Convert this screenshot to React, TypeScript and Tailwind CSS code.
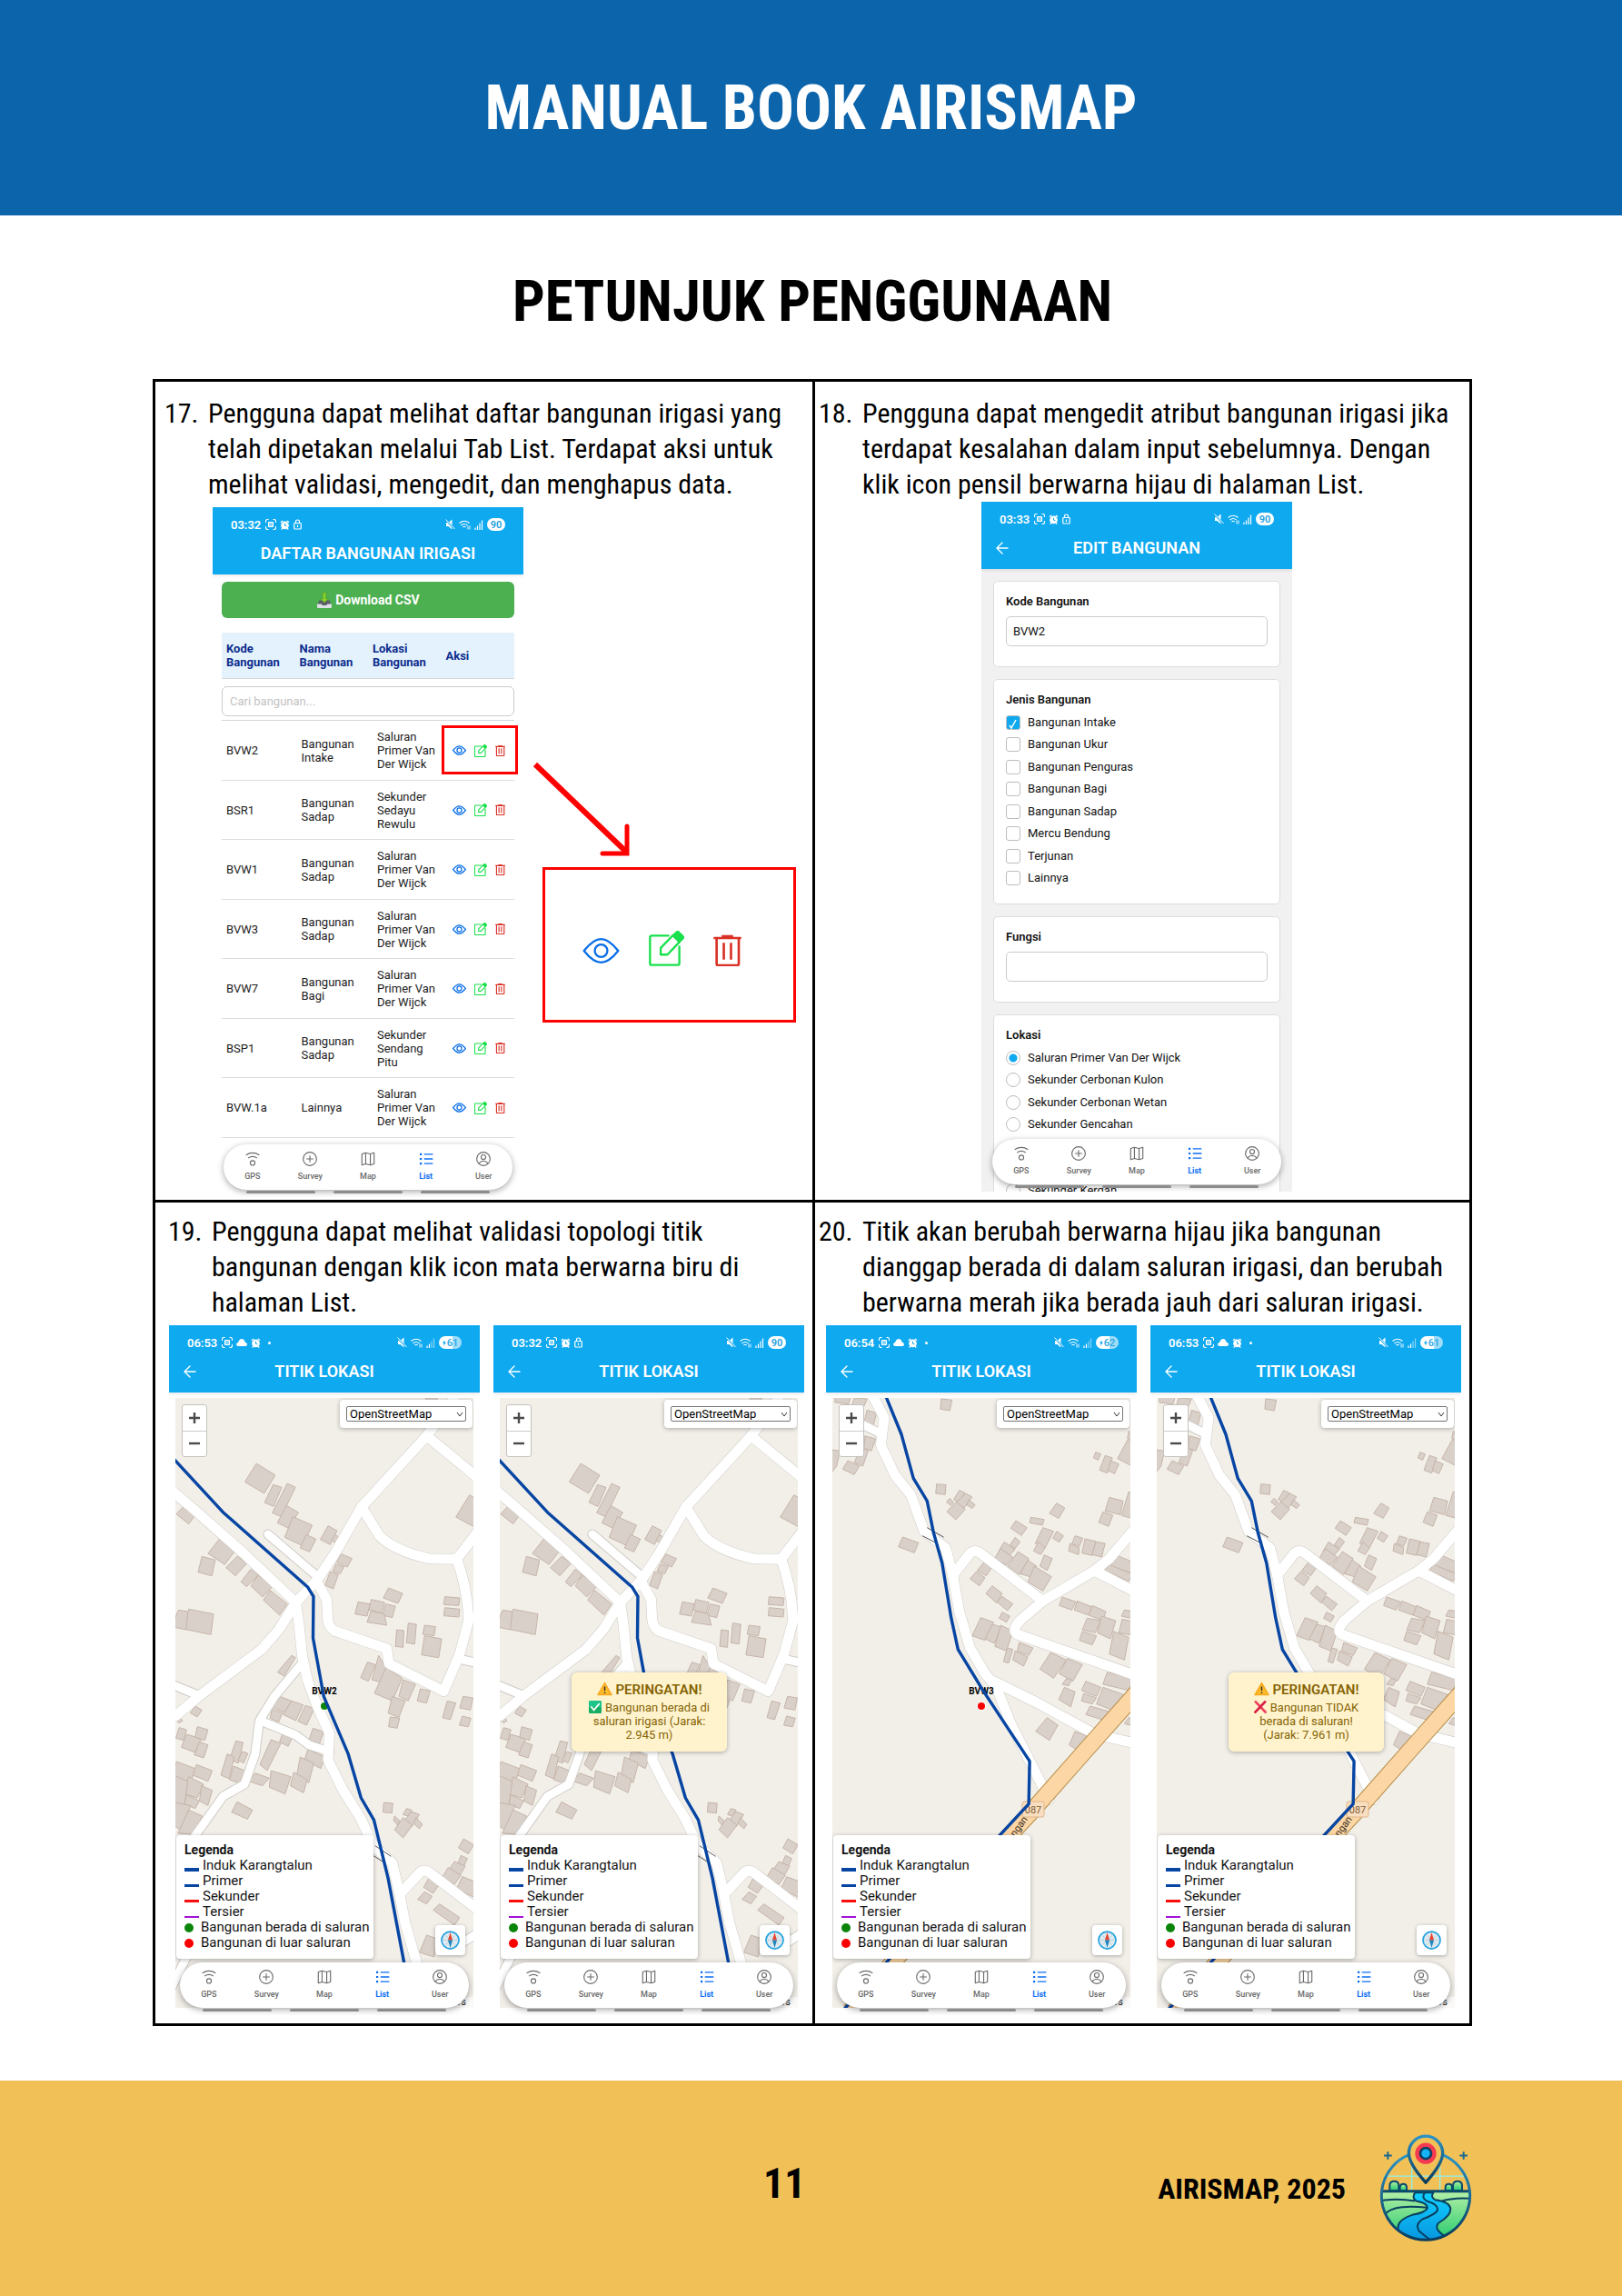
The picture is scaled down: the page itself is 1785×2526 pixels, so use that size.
import React from "react";

const condensed = "font-['Roboto_Condensed','Liberation_Sans',sans-serif]";

/* ---------- small icons ---------- */

function EyeIcon({ className, weight = 7 }: { className?: string; weight?: number }) {
  return (
    <svg viewBox="0 0 124 90" fill="none" stroke="#0a6fe8" strokeWidth={weight} className={className}>
      <path d="M5 45C28 16 44 6 62 6s34 10 57 39c-23 29-39 39-57 39S28 74 5 45z" strokeLinejoin="round" />
      <circle cx="62" cy="45" r="21" />
    </svg>
  );
}

function EditIcon({ className, weight = 7 }: { className?: string; weight?: number }) {
  return (
    <svg viewBox="342 74 116 116" fill="none" stroke="#19e04c" strokeWidth={weight} strokeLinejoin="round" className={className}>
      <path d="M406 90h-54a6 6 0 0 0-6 6v84a6 6 0 0 0 6 6h84a6 6 0 0 0 6-6v-54" strokeLinecap="round" />
      <path d="M381 152v-22l40-41 22 21-40 42z" />
      <path d="M422 89l12-11q2-2 5 0l15 15q1 2 0 5l-12 12z" fill="#19e04c" />
    </svg>
  );
}

function TrashIcon({ className, weight = 8 }: { className?: string; weight?: number }) {
  return (
    <svg viewBox="556 84 94 106" fill="none" stroke="#da3126" strokeWidth={weight} className={className}>
      <path d="M557 96h92M584 90h38" />
      <path d="M567 98v84q0 5 5 5h64q5 0 5-5V98" />
      <path d="M591 112v56M615 112v56" />
    </svg>
  );
}

function TrayIcon() {
  return (
    <svg viewBox="0 0 36 36" className="size-[18px]">
      <path d="M7 19h22l5 11H2z" fill="#5b6068" />
      <path d="M2 27h9l3 3h8l3-3h9v7q0 2-2 2H4q-2 0-2-2z" fill="#dfe1e6" />
      <path d="M15 3q4-3 6 0v13h5l-8 8-8-8h5z" fill="#8bd32b" stroke="#5f9e16" strokeWidth="1" />
    </svg>
  );
}

function WarningIcon() {
  return (
    <svg viewBox="0 0 34 32" className="mr-1 inline-block h-4 w-[17px] align-[-2px]">
      <path d="M17 3L32 29H2z" fill="#fdbb2c" stroke="#f6a81c" strokeWidth="3" strokeLinejoin="round" />
      <path d="M17 11v9M17 23v3" stroke="#35302a" strokeWidth="3" />
    </svg>
  );
}

function CheckIcon() {
  return (
    <svg viewBox="0 0 30 30" className="mr-1 inline-block size-[14px] align-[-2px]">
      <rect width="30" height="30" rx="3" fill="#1fc48a" />
      <rect y="15" width="30" height="15" rx="3" fill="#17ad62" />
      <path d="M6 15l6 7L24 8" fill="none" stroke="#fff" strokeWidth="4" strokeLinecap="round" />
    </svg>
  );
}

function CrossIcon() {
  return (
    <svg viewBox="0 0 30 30" className="mr-1 inline-block size-[14px] align-[-2px]">
      <path d="M4 3l23 24" stroke="#f0405f" strokeWidth="6" strokeLinecap="round" />
      <path d="M26 3L3 27" stroke="#d91f45" strokeWidth="6" strokeLinecap="round" />
    </svg>
  );
}

function CompassIcon() {
  return (
    <svg viewBox="0 0 42 42" className="size-[21px]">
      <circle cx="21" cy="21" r="19" fill="#dfeaf0" stroke="#27a3de" strokeWidth="3.5" />
      <path d="M21 6v30M6 21h30M11 11l20 20M31 11L11 31" stroke="#9fb3bd" strokeWidth="1" />
      <path d="M21 4l5 17H16z" fill="#e8432e" />
      <path d="M21 38l5-17H16z" fill="#1f86bd" />
    </svg>
  );
}

/* ---------- phone chrome ---------- */

type Battery = { level: string; charging: boolean };

function StatusBar({ time, battery }: { time: string; battery: Battery }) {
  return (
    <div className="flex h-[38px] items-center justify-between px-5">
      <div className="flex items-center gap-1">
        <span className="mr-px text-[13px] font-semibold leading-none">{time}</span>
        <svg viewBox="0 0 24 24" className="size-3" fill="none" stroke="#fff" strokeWidth="2.2">
          <path d="M7 1H5Q1 1 1 5v3M17 1h2q4 0 4 4v3M7 23H5q-4 0-4-4v-3M17 23h2q4 0 4-4v-3" />
          <rect x="7" y="7" width="10" height="10" rx="1" fill="#fff" fillOpacity=".5" />
        </svg>
        {battery.charging && (
          <svg viewBox="0 0 24 16" className="h-2 w-3" fill="#fff">
            <path d="M5 16q-5 0-5-4 0-3 4-4Q7 0 12 0q6 0 7 7 5 1 5 5 0 4-4 4z" />
          </svg>
        )}
        <svg viewBox="0 0 24 24" className="size-[11px]">
          <path d="M2 6l5-4M22 6l-5-4M6 20l-2 3M18 20l2 3" stroke="#fff" strokeWidth="3" />
          <circle cx="12" cy="13" r="9.5" fill="#fff" />
          <path d="M12 8v5l4 2" stroke="#0fa9f0" strokeWidth="2.2" fill="none" />
        </svg>
        {battery.charging ? (
          <span className="ml-1 size-[3px] rounded-full bg-white" />
        ) : (
          <svg viewBox="0 0 18 24" className="h-3 w-[9px]" fill="none" stroke="#fff" strokeWidth="2.4">
            <rect x="1.5" y="9" width="15" height="13" rx="1.5" />
            <path d="M5 9V6q0-4 4-4t4 4v3M9 13v5" />
          </svg>
        )}
      </div>
      <div className="flex items-center gap-1">
        <svg viewBox="0 0 22 24" className="h-3 w-[11px]" fill="#fff">
          <path d="M2 8h5l8-7v22l-8-7H2z" />
          <path d="M1 1l20 22" stroke="#0fa9f0" strokeWidth="4" />
          <path d="M1 1l20 21" stroke="#fff" strokeWidth="2" />
        </svg>
        <svg viewBox="0 0 26 22" className="h-[11px] w-[13px]" fill="none" stroke="#fff" strokeWidth="2.2">
          <path d="M1 7Q12-2 23 7M5 12q7-6 14 0M9 16q3-3 6 0" />
          <path d="M20 13v8M24 13v8" strokeWidth="1.8" />
        </svg>
        <svg viewBox="0 0 20 22" className="h-[11px] w-[10px]" stroke="#fff" strokeWidth="2.4">
          <path d="M2 22v-5M7 22v-9" />
          <path d="M12 22V7M17 22V1" strokeOpacity={battery.charging ? 0.5 : 1} />
        </svg>
        {battery.charging ? (
          <span className="flex h-[14px] w-[25px] items-center justify-center rounded-full bg-[linear-gradient(90deg,#fff_60%,#9fdcf9_60%)] text-[11px] font-medium leading-none text-[#2aa5e2]">
            <svg viewBox="0 0 10 16" className="mr-px h-[7px] w-1" fill="#0fa9f0">
              <path d="M6 0L0 9h4l-1 7 7-10H6z" />
            </svg>
            {battery.level}
          </span>
        ) : (
          <span className="flex h-[14px] w-5 items-center justify-center rounded-full bg-white text-[11px] font-semibold leading-none text-[#1d9fe0]">
            {battery.level}
          </span>
        )}
      </div>
    </div>
  );
}

function AppHeader({ title, time, battery, back }: { title: string; time: string; battery: Battery; back?: boolean }) {
  return (
    <header className="relative z-10 h-[74px] shrink-0 bg-[#0fa9f0] text-white shadow-[0_1px_4px_rgba(0,0,0,0.12)]">
      <StatusBar time={time} battery={battery} />
      <div className="relative flex h-[26px] items-center justify-center">
        {back && (
          <button type="button" aria-label="Kembali" className="absolute left-4">
            <svg viewBox="0 0 14 14" className="size-[14px]" fill="none" stroke="#fff" strokeWidth="1.4" strokeLinecap="round" strokeLinejoin="round">
              <path d="M7 1L1 7l6 6M1 7h12" />
            </svg>
          </button>
        )}
        <h3 className="text-[18px] font-semibold leading-none">{title}</h3>
      </div>
    </header>
  );
}

const tabs = [
  {
    label: "GPS",
    icon: (
      <>
        <path d="M2 12Q25-3 48 12M10 22q15-10 30 0" />
        <circle cx="25" cy="39" r="8" />
      </>
    ),
  },
  {
    label: "Survey",
    icon: (
      <>
        <circle cx="25" cy="25" r="23" />
        <path d="M25 13v24M13 25h24" />
      </>
    ),
  },
  {
    label: "Map",
    icon: <path d="M4 8l13-4 16 4 13-4v38l-13 4-16-4-13 4zM17 4v38M33 8v38" strokeLinejoin="round" />,
  },
  {
    label: "List",
    icon: (
      <>
        <path d="M18 9h30M18 25h30M18 41h30" strokeWidth="4" />
        <path d="M3 9h7M3 25h7M3 41h7" strokeWidth="7" />
      </>
    ),
  },
  {
    label: "User",
    icon: (
      <>
        <circle cx="25" cy="25" r="23" />
        <circle cx="25" cy="19" r="8" />
        <path d="M10 42q3-9 15-9t15 9" />
      </>
    ),
  },
];

function BottomNav() {
  return (
    <>
      <nav className="absolute inset-x-3 bottom-2 z-10 grid h-[50px] grid-cols-5 rounded-full bg-white shadow-[0_2px_7px_rgba(0,0,0,0.35)]">
        {tabs.map((tab) => (
          <a
            key={tab.label}
            href={"#" + tab.label}
            className={
              tab.label === "List"
                ? "flex flex-col items-center pt-2 text-[#0a6cf5] font-bold"
                : "flex flex-col items-center pt-2 text-[#6a6a6a] font-medium"
            }
          >
            <svg viewBox="0 0 50 50" className="size-4" fill="none" stroke="currentColor" strokeWidth="3.5">
              {tab.icon}
            </svg>
            <span className="mt-[5px] text-[9px] leading-3">{tab.label}</span>
          </a>
        ))}
      </nav>
      <div className="absolute bottom-[4px] left-[37px] z-10 flex gap-5">
        <span className="h-[3px] w-[76px] rounded-sm bg-[#8c8c8c]" />
        <span className="h-[3px] w-[76px] rounded-sm bg-[#8c8c8c]" />
        <span className="h-[3px] w-[76px] rounded-sm bg-[#8c8c8c]" />
      </div>
    </>
  );
}

function Phone({ children, className }: { children: React.ReactNode; className?: string }) {
  return (
    <section className={"relative flex h-[759px] w-[342px] shrink-0 flex-col overflow-hidden font-[Roboto,sans-serif] text-[13px] " + (className ?? "bg-white")}>
      {children}
      <BottomNav />
    </section>
  );
}

/* ---------- list screen ---------- */

const rows = [
  { kode: "BVW2", nama: ["Bangunan", "Intake"], lokasi: ["Saluran", "Primer Van", "Der Wijck"] },
  { kode: "BSR1", nama: ["Bangunan", "Sadap"], lokasi: ["Sekunder", "Sedayu", "Rewulu"] },
  { kode: "BVW1", nama: ["Bangunan", "Sadap"], lokasi: ["Saluran", "Primer Van", "Der Wijck"] },
  { kode: "BVW3", nama: ["Bangunan", "Sadap"], lokasi: ["Saluran", "Primer Van", "Der Wijck"] },
  { kode: "BVW7", nama: ["Bangunan", "Bagi"], lokasi: ["Saluran", "Primer Van", "Der Wijck"] },
  { kode: "BSP1", nama: ["Bangunan", "Sadap"], lokasi: ["Sekunder", "Sendang", "Pitu"] },
  { kode: "BVW.1a", nama: ["Lainnya"], lokasi: ["Saluran", "Primer Van", "Der Wijck"] },
];

function Lines({ items }: { items: string[] }) {
  return (
    <>
      {items.map((item) => (
        <span key={item} className="block whitespace-nowrap">
          {item}
        </span>
      ))}
    </>
  );
}

function ListScreen() {
  return (
    <Phone>
      <AppHeader title="DAFTAR BANGUNAN IRIGASI" time="03:32" battery={{ level: "90", charging: false }} />
      <div className="px-[10px] pt-2">
        <button type="button" className="flex h-10 w-full items-center justify-center gap-[3px] rounded-md bg-[#4caf50] text-[14px] font-bold text-white">
          <TrayIcon />
          Download CSV
        </button>
        <table className="mt-4 w-full table-fixed border-separate border-spacing-0 leading-[15px]">
          <thead>
            <tr className="h-[51px] bg-[#e3f2fd] text-left text-[#0d2c8c]">
              <th className="border-b border-[#d6d6d6] pl-[5px] font-bold"><Lines items={["Kode", "Bangunan"]} /></th>
              <th className="border-b border-[#d6d6d6] pl-[5px] font-bold"><Lines items={["Nama", "Bangunan"]} /></th>
              <th className="border-b border-[#d6d6d6] pl-[5px] font-bold"><Lines items={["Lokasi", "Bangunan"]} /></th>
              <th className="border-b border-[#d6d6d6] pl-[5px] font-bold">Aksi</th>
            </tr>
            <tr className="h-[46px]">
              <td colSpan={4} className="border-b border-[#d6d6d6] pt-[3px]">
                <input
                  type="text"
                  aria-label="Cari bangunan"
                  placeholder="Cari bangunan..."
                  className="block h-[33px] w-full rounded-md border border-[#cccccc] px-2 placeholder:text-[#c2c2c2]"
                />
              </td>
            </tr>
          </thead>
          <tbody className="text-[#1c1c1c]">
            {rows.map((row, i) => (
              <tr key={row.kode} className="odd:h-[66px] even:h-[65px]">
                <td className="border-b border-[#dcdcdc] pl-[5px]">{row.kode}</td>
                <td className="border-b border-[#dcdcdc] pl-[7px]"><Lines items={row.nama} /></td>
                <td className="border-b border-[#dcdcdc] pl-[10px]"><Lines items={row.lokasi} /></td>
                <td className="relative border-b border-[#dcdcdc] pl-3">
                  <div className="flex items-center gap-[9px]">
                    <button type="button" aria-label={"Lihat " + row.kode}><EyeIcon weight={10} className="block h-[11px] w-[15px]" /></button>
                    <button type="button" aria-label={"Edit " + row.kode}><EditIcon weight={9} className="block size-[14px]" /></button>
                    <button type="button" aria-label={"Hapus " + row.kode}><TrashIcon weight={10} className="block h-3 w-[11px]" /></button>
                  </div>
                  {i === 0 && <span className="pointer-events-none absolute left-0 top-[5px] z-10 h-[54px] w-[84px] border-[3px] border-[#fe0000]" />}
                </td>
              </tr>
            ))}
          </tbody>
        </table>
      </div>
    </Phone>
  );
}

/* ---------- edit screen ---------- */

const jenis = ["Bangunan Intake", "Bangunan Ukur", "Bangunan Penguras", "Bangunan Bagi", "Bangunan Sadap", "Mercu Bendung", "Terjunan", "Lainnya"];
const lokasi = ["Saluran Primer Van Der Wijck", "Sekunder Cerbonan Kulon", "Sekunder Cerbonan Wetan", "Sekunder Gencahan", "", "", "Sekunder Kergan"];

function EditScreen() {
  const card = "rounded-[5px] border border-[#dddddd] bg-white px-[13px] pt-3";
  const field = "mt-[6px] block h-[33px] w-full rounded-[5px] border border-[#cccccc] px-[7px]";
  return (
    <Phone className="bg-[#f1f1f1]">
      <AppHeader title="EDIT BANGUNAN" time="03:33" battery={{ level: "90", charging: false }} back />
      <form className="flex flex-col gap-[13px] px-[13px] pt-[13px] leading-5 text-[#111111]">
        <div className={card + " pb-[22px]"}>
          <label htmlFor="kode" className="block font-semibold">Kode Bangunan</label>
          <input id="kode" type="text" defaultValue="BVW2" className={field} />
        </div>
        <fieldset className={card + " pb-5"}>
          <legend className="float-left font-semibold">Jenis Bangunan</legend>
          <div className="clear-both flex h-[194px] flex-col justify-between pt-[7px]">
            {jenis.map((name, i) => (
              <label key={name} className="flex h-4 items-center gap-2">
                <span className="relative flex size-4">
                  <input
                    type="checkbox"
                    defaultChecked={i === 0}
                    className="size-4 appearance-none rounded-[3px] border border-[#bdbdbd] bg-white checked:bg-[#0fa9f0]"
                  />
                  {i === 0 && (
                    <svg viewBox="0 0 16 16" className="pointer-events-none absolute inset-0" fill="none" stroke="#fff" strokeWidth="1.5">
                      <path d="M4 11l2 3 5-9" />
                    </svg>
                  )}
                </span>
                {name}
              </label>
            ))}
          </div>
        </fieldset>
        <div className={card + " pb-[22px]"}>
          <label htmlFor="fungsi" className="block font-semibold">Fungsi</label>
          <input id="fungsi" type="text" className={field} />
        </div>
        <fieldset className={card + " pb-5"}>
          <legend className="float-left font-semibold">Lokasi</legend>
          <div className="clear-both flex h-[169px] flex-col justify-between pt-[7px]">
            {lokasi.map((name, i) => (
              <label key={i} className="flex h-4 items-center gap-2">
                <input
                  type="radio"
                  name="lokasi"
                  aria-label={name || "Sekunder"}
                  defaultChecked={i === 0}
                  className="size-4 appearance-none rounded-full border border-[#bdbdbd] bg-white checked:bg-[radial-gradient(circle,#0fa9f0_4px,#fff_5px)]"
                />
                {name}
              </label>
            ))}
          </div>
        </fieldset>
      </form>
    </Phone>
  );
}

/* ---------- map screens ---------- */

type MapArt = {
  viewBox: string;
  roads: string[];
  lanes: string[];
  buildings: string[];
  canal: string;
  bridge: string;
  highway?: string;
  label: string;
  dot: string;
};

const mapVillage: MapArt = {
  viewBox: "69 655 695 2013",
  roads: [
    "M720 655L655 780L503 1015L440 1170L400 1255L350 1330L310 1420L270 1485L125 1638L69 1705",
    "M60 960L110 1020L230 1170L350 1330L357 1400L365 1510L378 1590L402 1680L428 1760L425 1850L460 1950L500 2040L530 2130L575 2190L590 2280L605 2390L640 2560",
    "M655 780L775 920",
    "M503 1015L545 1110Q580 1160 660 1185L725 1187L775 1095",
    "M725 1187Q750 1280 753 1390L732 1500L695 1623L567 1532L562 1482L440 1424Q425 1410 424 1380L422 1320L400 1265",
    "M594 2290L640 2220Q650 2210 662 2222L775 2345",
  ],
  lanes: [
    "M365 1530L300 1640L265 1720L255 1830L230 1930L180 1970L110 2110",
    "M270 1722L350 1768L380 1800L428 1822",
    "M285 1105L405 1250",
    "M60 1600L125 1638",
    "M735 1518L775 1530",
    "M60 2600L95 2500",
    "M730 2460L775 2420",
  ],
  buildings: [
    "258,871 302,910 276,970 231,932", "297,941 317,950 298,1013 277,1000", "330,937 349,950 316,1047 295,1034", "328,1010 356,1033 333,1085 307,1067",
    "343,1047 388,1075 366,1143 324,1115", "374,1106 397,1121 382,1163 360,1150", "425,1077 446,1093 430,1139 407,1122", "441,1107 450,1113 442,1133 433,1125",
    "456,1170 481,1185 470,1213 445,1197", "443,1203 462,1212 454,1235 436,1227", "430,1228 449,1238 437,1285 418,1273", "566,1282 599,1300 588,1333 554,1315",
    "495,1328 523,1335 516,1375 488,1368", "526,1320 557,1330 550,1365 520,1355", "560,1335 582,1342 575,1380 552,1372", "525,1358 556,1368 562,1405 516,1395",
    "697,1311 732,1315 730,1340 695,1337", "697,1347 732,1352 730,1378 695,1374", "755,975 780,995 765,1080 723,1048", "88,1013 116,1040 100,1071 71,1038",
    "173,1118 208,1160 184,1205 145,1168", "131,1178 162,1190 154,1242 122,1230", "213,1178 236,1200 209,1242 187,1215", "245,1220 262,1240 235,1278 222,1262",
    "262,1240 297,1275 272,1312 245,1275", "290,1290 330,1335 312,1372 274,1322", "100,1352 158,1368 152,1436 90,1418", "76,1355 98,1360 94,1420 60,1410",
    "585,1420 602,1423 600,1478 582,1475", "612,1398 631,1402 627,1467 608,1463", "650,1405 676,1410 672,1440 646,1435", "650,1440 690,1450 683,1512 643,1503",
    "340,1505 349,1512 323,1573 307,1560", "517,1527 535,1535 519,1590 501,1578", "543,1505 560,1545 552,1595 527,1585", "560,1545 598,1580 575,1655 533,1630",
    "600,1585 629,1600 612,1655 590,1640", "575,1640 605,1655 590,1710 565,1695", "570,1708 592,1712 586,1745 566,1740", "640,1615 663,1622 655,1662 633,1655",
    "703,1655 723,1662 710,1717 692,1710", "740,1640 763,1645 757,1685 732,1678", "738,1705 758,1712 752,1740 731,1735", "115,1672 131,1685 120,1708 104,1695",
    "78,1708 86,1720 78,1728 70,1718", "312,1640 340,1655 325,1695 297,1675", "340,1655 367,1668 350,1720 320,1700", "295,1680 318,1695 310,1725 290,1712",
    "372,1670 393,1680 375,1735 355,1722", "322,1750 345,1765 332,1805 312,1790", "390,1745 415,1757 405,1795 380,1785", "292,1783 315,1795 283,1885 266,1865",
    "378,1815 418,1840 408,1878 370,1850", "360,1840 392,1860 380,1925 352,1900", "345,1890 376,1915 368,1958 337,1935", "292,1885 338,1905 325,1962 288,1940",
    "255,1893 288,1910 272,1935 240,1920", "210,1787 227,1792 216,1860 195,1850", "190,1830 206,1840 195,1912 175,1900", "205,1870 240,1890 225,1930 195,1915",
    "225,1822 238,1828 228,1860 215,1850", "78,1743 95,1750 88,1785 70,1778", "95,1765 130,1780 115,1825 83,1808", "120,1740 145,1750 138,1785 115,1775",
    "125,1790 145,1800 135,1843 113,1833", "72,1855 118,1880 103,1925 60,1900", "118,1865 155,1885 145,1920 110,1900", "100,1905 135,1930 120,1975 85,1960",
    "130,1935 155,1950 145,2000 125,1985", "65,1900 98,1920 90,2000 60,1990", "95,1965 125,1985 115,2010 90,1995", "65,1990 105,2000 80,2080 60,2060",
    "100,2015 132,2035 110,2095 75,2092", "213,1988 249,2015 237,2045 200,2022", "555,1990 576,1993 574,2025 553,2022", "608,2010 620,2015 612,2035 600,2030",
    "620,2020 638,2030 620,2070 600,2055", "600,2040 622,2065 600,2107 580,2080", "580,2035 592,2050 587,2065 578,2050", "630,2040 645,2062 638,2077 625,2060",
    "741,2110 765,2130 752,2160 729,2140", "735,2165 750,2175 742,2200 728,2190", "720,2185 745,2200 732,2232 705,2215", "705,2205 735,2230 720,2260 690,2240",
    "738,2235 775,2255 775,2310 725,2275", "660,2240 685,2260 670,2290 648,2270", "650,2285 668,2300 655,2325 634,2310", "685,2325 732,2370 720,2395 670,2345",
    "655,2428 680,2440 672,2500 638,2485", "652,655 680,655 678,665 655,665",
  ],
  canal: "M60 848L180 1032L378 1280L391 1310L390 1447L415 1640L472 1830L502 1975L532 2048L565 2240L602 2517L625 2680",
  bridge: "M535 2133L572 2168M530 2165L560 2192",
  label: "BVW2",
  dot: "#0a850a",
};

const mapHighway: MapArt = {
  viewBox: "54 655 695 2013",
  roads: [
    "M145 640L175 720L167 810L200 910L237 975L268 1095L318 1150L335 1240L350 1360L375 1480L410 1565L435 1605L470 1730L560 1980",
    "M335 1240L375 1168Q385 1155 397 1165L545 1325",
    "M760 1085L700 1185L665 1225L545 1325L495 1385Q470 1420 485 1435L560 1472L760 1570",
    "M665 1225L760 1295",
    "M430 1590L530 1660L660 1760L700 1775L760 1795",
  ],
  lanes: ["M120 740L170 775"],
  buildings: [
    "308,658 333,662 328,697 306,692", "60,640 96,655 92,675 60,670", "105,655 135,658 128,682 100,678", "135,695 157,705 150,745 128,735",
    "130,780 155,790 145,830 128,820", "120,820 138,828 125,880 105,868", "90,862 117,880 105,908 78,890", "50,825 72,830 64,880 50,905",
    "668,834 680,840 674,860 663,853", "690,845 707,853 695,903 677,893", "703,862 722,873 712,905 697,895", "745,765 755,770 755,795 742,790",
    "742,795 760,800 760,885 719,855", "297,939 319,942 317,974 295,970", "350,960 363,968 350,1000 337,990", "365,970 380,982 360,1020 343,1000",
    "343,998 364,1022 342,1057 321,1030", "328,986 337,1000 330,1010 320,998", "372,990 387,1008 380,1020 368,1008", "218,1114 255,1133 245,1166 208,1146",
    "577,1002 596,1018 582,1052 560,1036", "517,1049 548,1056 544,1075 514,1067", "700,983 732,995 725,1040 690,1028", "745,965 760,968 760,1055 728,1043",
    "685,1031 708,1042 698,1079 675,1065", "482,1060 508,1083 495,1109 470,1085", "545,1083 570,1095 550,1150 527,1135", "577,1095 593,1110 583,1131 568,1118",
    "535,1130 550,1150 540,1172 523,1160", "480,1115 492,1130 480,1152 468,1140", "455,1130 480,1155 465,1178 442,1160", "446,1152 475,1180 460,1207 432,1187",
    "487,1162 512,1185 490,1238 463,1210", "510,1190 530,1210 515,1245 492,1235", "525,1210 565,1245 545,1292 510,1262", "548,1173 567,1185 555,1224 538,1210",
    "620,1110 638,1118 630,1145 613,1135", "608,1135 630,1150 628,1172 605,1160", "643,1120 668,1128 660,1175 636,1167", "668,1130 690,1135 682,1180 660,1172",
    "715,1173 760,1200 760,1235 700,1210", "700,1205 755,1238 745,1260 690,1225", "407,1198 427,1213 413,1242 392,1225", "390,1228 410,1248 397,1275 375,1252",
    "427,1275 450,1300 437,1332 412,1300", "450,1310 475,1335 462,1357 438,1328", "590,1312 622,1328 612,1355 583,1340", "625,1325 660,1345 652,1372 618,1355",
    "660,1340 692,1360 685,1390 652,1372", "735,1355 760,1360 760,1385 728,1375", "450,1362 468,1375 460,1395 443,1382", "400,1380 430,1395 410,1455 380,1440",
    "427,1402 447,1410 432,1465 410,1450", "447,1405 475,1425 460,1490 433,1475", "490,1462 522,1480 512,1505 485,1490", "480,1490 510,1510 500,1540 475,1520",
    "462,1480 475,1485 465,1530 453,1525", "563,1495 600,1520 570,1580 538,1550", "602,1515 637,1535 615,1590 583,1565", "600,1580 612,1585 605,1605 590,1600",
    "648,1382 680,1390 667,1430 637,1420", "637,1425 670,1440 660,1470 630,1455", "682,1375 715,1390 702,1450 672,1430", "710,1425 745,1445 735,1520 700,1500",
    "730,1385 760,1395 760,1440 722,1430", "595,1610 620,1625 610,1675 582,1650", "645,1590 680,1610 670,1640 635,1620", "640,1630 670,1645 660,1665 635,1655",
    "695,1560 755,1580 745,1620 685,1600", "685,1610 735,1635 715,1690 670,1665", "655,1672 700,1690 690,1720 645,1700", "555,1710 580,1735 560,1785 528,1755",
    "620,1755 655,1775 628,1820 606,1800", "745,1710 760,1715 760,1740 735,1730",
  ],
  canal: "M176 640L215 775L243 920L275 995L290 1100L310 1200L331 1380L347 1485L405 1620L514 1854L512 1995L440 2105L185 2510L80 2675",
  bridge: "M275 1083L314 1115M264 1110L298 1135",
  highway: "M775 1610L640 1825L512 2030L440 2140L200 2510L95 2680",
  label: "BVW3",
  dot: "#f80000",
};

function MapArtwork({ art, marker }: { art: MapArt; marker: boolean }) {
  return (
    <svg viewBox="0 0 328 671" preserveAspectRatio="none" className="absolute inset-0 size-full bg-[#f2efe9]">
      <svg width="328" height="671" viewBox={art.viewBox} preserveAspectRatio="none" fill="none" strokeLinejoin="round">
        <g fill="#d9d0c9" stroke="#c6b5aa">
          {art.buildings.map((points) => (
            <polygon key={points} points={points} vectorEffect="non-scaling-stroke" />
          ))}
        </g>
        <g stroke="#cfccc7" strokeLinecap="round">
          {art.roads.map((d) => <path key={d} d={d} strokeWidth="12" vectorEffect="non-scaling-stroke" />)}
          {art.lanes.map((d) => <path key={d} d={d} strokeWidth="11" vectorEffect="non-scaling-stroke" />)}
        </g>
        <g stroke="#ffffff" strokeLinecap="round">
          {art.roads.map((d) => <path key={d} d={d} strokeWidth="11" vectorEffect="non-scaling-stroke" />)}
          {art.lanes.map((d) => <path key={d} d={d} strokeWidth="9" vectorEffect="non-scaling-stroke" />)}
        </g>
        <path d={art.bridge} stroke="#555" vectorEffect="non-scaling-stroke" />
        {art.highway && (
          <>
            <path d={art.highway} stroke="#b38b45" strokeWidth="19" vectorEffect="non-scaling-stroke" />
            <path d={art.highway} stroke="#fcd6a4" strokeWidth="17" vectorEffect="non-scaling-stroke" />
          </>
        )}
      </svg>
      {art.highway && (
        <g fontFamily="Roboto, sans-serif" fontSize="11" textAnchor="middle">
          <rect x="209" y="444" width="24" height="17" rx="2" fill="#f9dfc0" stroke="#e0b48c" />
          <text x="221" y="457" fill="#7d5a38">087</text>
          <text x="205" y="475" fill="#3d3326" transform="rotate(-54 205 471)">ngan</text>
        </g>
      )}
      {marker && (
        <g>
          <circle cx="164" cy="339" r="5" fill="#fff" />
          <circle cx="164" cy="339" r="4" fill={art.dot} />
          <text x="164" y="326" fontFamily="Roboto, sans-serif" fontSize="10" fontWeight="700" textAnchor="middle">{art.label}</text>
        </g>
      )}
      <svg width="328" height="671" viewBox={art.viewBox} preserveAspectRatio="none" fill="none">
        <path d={art.canal} stroke="#0745a3" strokeWidth="3.4" strokeLinejoin="round" vectorEffect="non-scaling-stroke" />
      </svg>
    </svg>
  );
}

function Legend() {
  const lines = [
    { name: "Induk Karangtalun", swatch: "h-1 bg-[#0745a3]" },
    { name: "Primer", swatch: "h-[3px] bg-[#0745a3]" },
    { name: "Sekunder", swatch: "h-[3px] bg-[#fb0d0d]" },
    { name: "Tersier", swatch: "h-0.5 bg-[#a312d6]" },
  ];
  const points = [
    { name: "Bangunan berada di saluran", dot: "bg-[#0a850a]" },
    { name: "Bangunan di luar saluran", dot: "bg-[#fb0000]" },
  ];
  return (
    <div className="absolute left-px top-[481px] h-[136px] w-[217px] rounded bg-white pl-[9px] pt-2 text-[15px] leading-[17px] text-[#141414] shadow-[0_1px_5px_rgba(0,0,0,0.3)]">
      <h4 className="text-[14px] font-bold">Legenda</h4>
      <ul>
        {lines.map((line) => (
          <li key={line.name} className="flex items-center gap-1">
            <span className="flex h-3 w-4 items-end">
              <span className={"block w-4 " + line.swatch} />
            </span>
            {line.name}
          </li>
        ))}
        {points.map((point) => (
          <li key={point.name} className="flex items-center gap-2 whitespace-nowrap">
            <span className={"size-[10px] rounded-full " + point.dot} />
            {point.name}
          </li>
        ))}
      </ul>
    </div>
  );
}

function MapScreen({ id, time, battery, art, children }: { id: string; time: string; battery: Battery; art: MapArt; children?: React.ReactNode }) {
  return (
    <Phone>
      <AppHeader title="TITIK LOKASI" time={time} battery={battery} back />
      <div className="relative mx-[7px] mt-[6px] h-[671px] overflow-hidden">
        <MapArtwork art={art} marker={!children} />
        <div className="absolute left-[7px] top-[7px] flex h-[58px] w-[28px] flex-col divide-y divide-[#cccccc] rounded-[3px] border border-[#c6c3be] bg-white">
          <button type="button" aria-label="Perbesar" className="flex flex-1 items-center justify-center">
            <svg viewBox="0 0 12 12" className="size-3" stroke="#4a4a4a" strokeWidth="2.4"><path d="M6 0v12M0 6h12" /></svg>
          </button>
          <button type="button" aria-label="Perkecil" className="flex flex-1 items-center justify-center">
            <svg viewBox="0 0 12 12" className="size-3" stroke="#4a4a4a" strokeWidth="2.4"><path d="M0 6h12" /></svg>
          </button>
        </div>
        <div className="absolute right-px top-0.5 flex h-[31px] w-[146px] items-center rounded bg-white px-[7px] shadow-[0_1px_5px_rgba(0,0,0,0.3)]">
          <select id={id} aria-label="Peta dasar" className="h-[17px] w-full appearance-none rounded-[2px] border border-[#767676] bg-white pl-[3px] text-[13px] leading-none text-black">
            <option>OpenStreetMap</option>
          </select>
          <svg viewBox="0 0 8 6" className="pointer-events-none absolute right-[10px] h-1.5 w-2" fill="none" stroke="#333"><path d="M1 1l3 4 3-4" /></svg>
        </div>
        {children}
        <Legend />
        <button type="button" aria-label="Kompas" className="absolute bottom-[58px] right-[9px] flex size-[33px] items-center justify-center rounded bg-white shadow-[0_1px_4px_rgba(0,0,0,0.3)]">
          <CompassIcon />
        </button>
        <span className="absolute bottom-0 right-0 bg-white/70 pr-2 text-[11px] leading-3 text-[#222]">ors</span>
      </div>
    </Phone>
  );
}

function Alert({ icon, children }: { icon: React.ReactNode; children: React.ReactNode }) {
  return (
    <div role="alert" className="absolute left-[79px] top-[302px] h-[87px] w-[171px] rounded-md bg-[#fff3cd] pt-[10px] text-center leading-[15px] text-[#856404] shadow-[0_1px_5px_rgba(0,0,0,0.3)]">
      <p className="mb-[2px] text-[15px] font-semibold leading-[19px]"><WarningIcon />PERINGATAN!</p>
      <p>{icon}{children}</p>
    </div>
  );
}

/* ---------- page ---------- */

function Step({ number, lines, className }: { number: string; lines: string[]; className?: string }) {
  return (
    <div className={condensed + " flex text-[30px] leading-[39px] text-black " + (className ?? "")}>
      <span className="w-12 shrink-0">{number}</span>
      <p className="whitespace-nowrap">
        {lines.map((line) => (
          <span key={line} className="block">{line}</span>
        ))}
      </p>
    </div>
  );
}

function Logo() {
  return (
    <svg viewBox="834 84 306 356" className="h-[119px] w-[102px]" fill="none">
      <defs>
        <linearGradient id="ring" x1="0" y1="0" x2="0" y2="1">
          <stop offset="0" stopColor="#2b93c4" />
          <stop offset="1" stopColor="#0a3c5c" />
        </linearGradient>
        <linearGradient id="field" x1="0" y1="0" x2="0" y2="1">
          <stop offset="0" stopColor="#b5f0a6" />
          <stop offset="1" stopColor="#1fc96b" />
        </linearGradient>
        <linearGradient id="water" x1="0" y1="0" x2="0" y2="1">
          <stop offset="0" stopColor="#10d0ff" />
          <stop offset="1" stopColor="#0793dd" />
        </linearGradient>
        <clipPath id="disc"><circle cx="987" cy="288" r="146" /></clipPath>
      </defs>
      <path d="M850 222h275M941 190v78M1034 190v78" stroke="#8ff0ec" strokeWidth="4" />
      <g stroke="#0a4a6c" strokeWidth="6" fill="url(#field)">
        <path d="M902 270v-10q0-12 11-12t11 12v10zM1052 270v-10q0-12 11-12t11 12v10z" />
        <path d="M868 270v-17q0-14 15-14t15 14v17zM1077 270v-17q0-14 15-14t15 14v17z" />
      </g>
      <g clipPath="url(#disc)">
        <rect x="838" y="272" width="300" height="166" fill="url(#field)" />
        <g stroke="#0a3f60" strokeWidth="6">
          <path d="M846 302q50-8 106 2M1136 296q-60-4-102 10" />
          <path d="M856 344q30-30 136-18" />
          <path d="M952 276q-12 18 4 28 40 8 36 24-6 14-50 22-64 22-40 62l50 30h140l-38-20q-44-26-24-46 44-26 38-50-4-20-50-26-16-8-6-24z" fill="url(#water)" />
          <path d="M984 276q-12 18 6 28 40 12 36 30-6 14-50 30-26 18-10 40l40 32" />
        </g>
        <path d="M838 272h300" stroke="#0a4a6c" strokeWidth="9" />
      </g>
      <path d="M928 153A146 146 0 1 0 1046 153" stroke="url(#ring)" strokeWidth="9" />
      <path d="M987 243q-56-62-56-97a56 56 0 1 1 112 0q0 35-56 97z" stroke="url(#ring)" strokeWidth="10" strokeLinejoin="round" />
      <circle cx="987" cy="147" r="27" stroke="#f73a50" strokeWidth="16" />
      <circle cx="987" cy="147" r="18" fill="#15b4f5" stroke="#0b4163" strokeWidth="8" />
      <path d="M862 141v26M849 154h26M1112 141v26M1099 154h26" stroke="#17688f" strokeWidth="6" />
    </svg>
  );
}

export default function App() {
  return (
    <div className="flex min-h-screen flex-col bg-white">
      <header className="flex h-[237px] items-center justify-center bg-[#0c64ab]">
        <h1 className={condensed + " text-[68px] font-bold leading-none text-white"}>MANUAL BOOK AIRISMAP</h1>
      </header>
      <main className="flex-1 pb-[60px] pl-[168px] pr-[165px]">
        <h2 className={condensed + " flex h-[180px] items-center justify-center pt-2 text-[63px] font-bold leading-none text-black"}>PETUNJUK PENGGUNAAN</h2>
        <div className="grid grid-cols-[726fr_720fr] border-[3px] border-black">
          <article className="relative border-b-[3px] border-r-[3px] border-black pb-[3px] pt-[15px]">
            <Step
              number="17."
              className="pl-[10px]"
              lines={["Pengguna dapat melihat daftar bangunan irigasi yang", "telah dipetakan melalui Tab List. Terdapat aksi untuk", "melihat validasi, mengedit, dan menghapus data."]}
            />
            <div className="mt-[6px] flex pl-[63px]">
              <ListScreen />
              <div className="ml-[21px] mt-[396px] flex h-[171px] w-[279px] items-center justify-center border-[3px] border-[#fe0000] pr-4 pt-3">
                <EyeIcon className="h-[30px] w-[41px]" />
                <EditIcon className="mb-1 ml-8 size-[39px]" />
                <TrashIcon className="ml-8 h-[35px] w-[31px]" />
              </div>
            </div>
            <svg viewBox="0 0 112 112" className="pointer-events-none absolute left-[415px] top-[416px] size-28" fill="none" stroke="#fe0000">
              <path d="M3 5l101 97" strokeWidth="6" />
              <path d="M104 73v30H77" strokeWidth="5" strokeLinecap="round" />
            </svg>
          </article>
          <article className="border-b-[3px] border-black pt-[15px]">
            <Step
              number="18."
              className="pl-1"
              lines={["Pengguna dapat mengedit atribut bangunan irigasi jika", "terdapat kesalahan dalam input sebelumnya. Dengan", "klik icon pensil berwarna hijau di halaman List."]}
            />
            <div className="pl-[183px]">
              <EditScreen />
            </div>
          </article>
          <article className="border-r-[3px] border-black pb-[9px] pt-3">
            <Step
              number="19."
              className="pl-[14px]"
              lines={["Pengguna dapat melihat validasi topologi titik", "bangunan dengan klik icon mata berwarna biru di", "halaman List."]}
            />
            <div className="mt-[6px] flex gap-[15px] pl-[15px]">
              <MapScreen id="basemap-a" time="06:53" battery={{ level: "61", charging: true }} art={mapVillage} />
              <MapScreen id="basemap-b" time="03:32" battery={{ level: "90", charging: false }} art={mapVillage}>
                <Alert icon={<CheckIcon />}>Bangunan berada di<br />saluran irigasi (Jarak:<br />2.945 m)</Alert>
              </MapScreen>
            </div>
          </article>
          <article className="pb-[9px] pt-3">
            <Step
              number="20."
              className="pl-1"
              lines={["Titik akan berubah berwarna hijau jika bangunan", "dianggap berada di dalam saluran irigasi, dan berubah", "berwarna merah jika berada jauh dari saluran irigasi."]}
            />
            <div className="mt-[6px] flex gap-[15px] pl-3">
              <MapScreen id="basemap-c" time="06:54" battery={{ level: "62", charging: true }} art={mapHighway} />
              <MapScreen id="basemap-d" time="06:53" battery={{ level: "61", charging: true }} art={mapHighway}>
                <Alert icon={<CrossIcon />}>Bangunan TIDAK<br />berada di saluran!<br />(Jarak: 7.961 m)</Alert>
              </MapScreen>
            </div>
          </article>
        </div>
      </main>
      <footer className={condensed + " flex h-[237px] items-center bg-[#f1c158] pl-[840px] pr-[165px] font-bold leading-none text-black"}>
        <span className="pb-3 text-[46px]">11</span>
        <span className="ml-auto text-[32px]">AIRISMAP, 2025</span>
        <span className="ml-[37px]"><Logo /></span>
      </footer>
    </div>
  );
}
